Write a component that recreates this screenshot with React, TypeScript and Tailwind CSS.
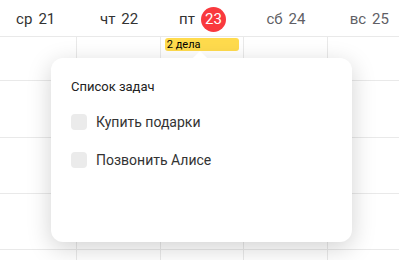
import React from "react";

const days = [
  { d: "ср", n: "21", weekend: false },
  { d: "чт", n: "22", weekend: false },
  { d: "пт", n: "23", weekend: false, today: true },
  { d: "сб", n: "24", weekend: true },
  { d: "вс", n: "25", weekend: true },
];

export default function App() {
  return (
    <div
      className="relative w-[399px] h-[260px] overflow-hidden bg-white"
      style={{ fontFamily: "Roboto, 'Noto Sans', sans-serif" }}
    >
      <div className="ml-[-6px] w-[417px]">
        <div className="grid grid-cols-5 h-[37px] border-b border-[#e9e9e9] pt-[3px]">
          {days.map((x) => (
            <div key={x.n} className="flex items-center justify-center gap-[6px] text-[15px]">
              <span className={x.weekend ? "text-[#5f5f66]" : "text-[#333]"}>{x.d}</span>
              {x.today ? (
                <span className="flex h-[25px] w-[25px] items-center justify-center rounded-full bg-[#f9393e] text-white text-[15px]">
                  {x.n}
                </span>
              ) : (
                <span className={x.weekend ? "text-[#5f5f66]" : "text-[#333]"}>{x.n}</span>
              )}
            </div>
          ))}
        </div>
        <div className="grid grid-cols-5">
          {days.map((x, i) => (
            <div key={x.n} className={i < 4 ? "border-r border-[#e9e9e9]" : ""}>
              <div className="h-[44px] border-b border-[#e9e9e9] pt-[1px] px-[4px]">
                {x.today && (
                  <div className="h-[13px] rounded-[3px] bg-[#ffdb4d] pl-[2px] text-[11px] leading-[13px] text-black">
                    2 дела
                  </div>
                )}
              </div>
              <div className="h-[57px] border-b border-[#e9e9e9]" />
              <div className="h-[56px] border-b border-[#e9e9e9]" />
              <div className="h-[56px] border-b border-[#e9e9e9]" />
              <div className="h-[20px]" />
            </div>
          ))}
        </div>
      </div>

      <div className="absolute left-[51px] top-[58px] w-[301px] h-[184px] rounded-[12px] bg-white shadow-[0_6px_24px_rgba(0,0,0,0.18)]">
        <div className="absolute left-[144px] top-[-5px] h-[10px] w-[10px] rotate-45 bg-white" />
        <div className="relative px-[20px] pt-[20px]">
          <div className="text-[13px] leading-[18px] text-[#222]">Список задач</div>
          <div className="mt-[18px] flex flex-col gap-[22px]">
            {["Купить подарки", "Позвонить Алисе"].map((t) => (
              <div key={t} className="flex items-center gap-[9px]">
                <div className="h-[16px] w-[16px] rounded-[4px] bg-[#ebebeb]" />
                <span className="text-[14px] leading-[16px] text-[#333]">{t}</span>
              </div>
            ))}
          </div>
        </div>
      </div>
    </div>
  );
}
